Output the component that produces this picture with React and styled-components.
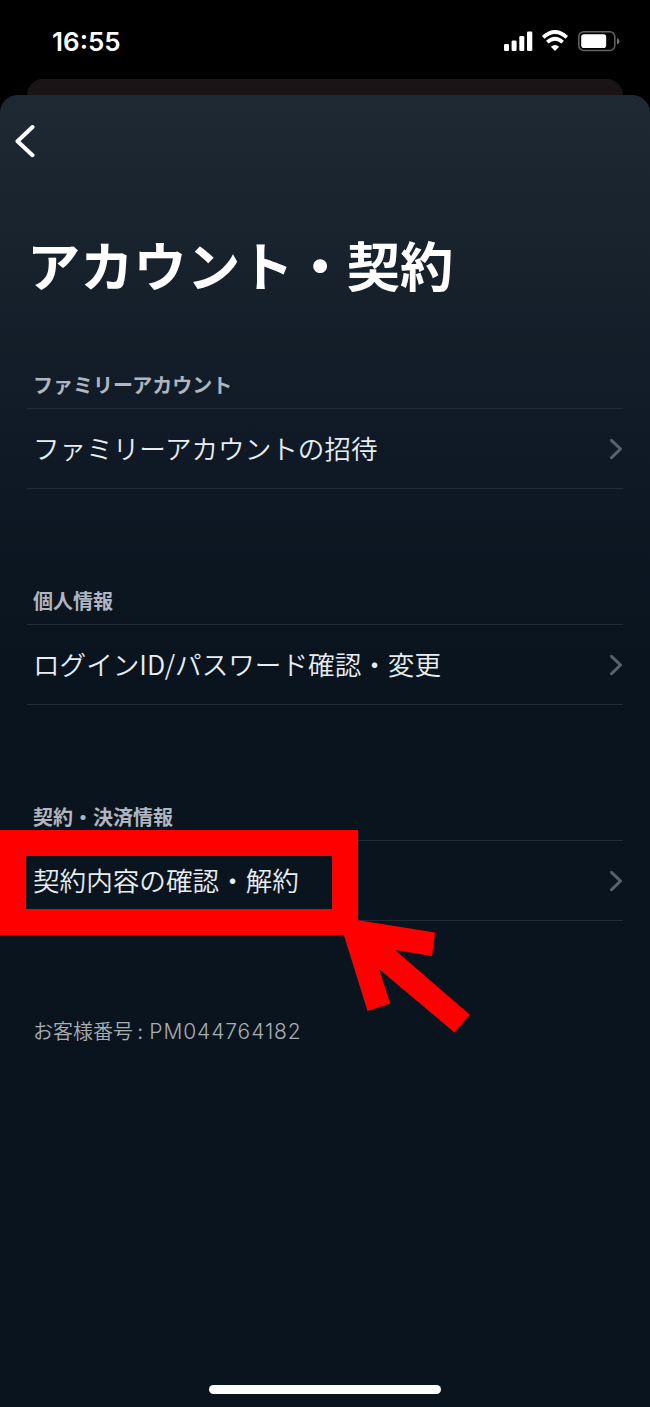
import React from 'react';
import styled, { createGlobalStyle } from 'styled-components';

const sections = [
  {
    title: 'ファミリーアカウント',
    item: 'ファミリーアカウントの招待',
  },
  {
    title: '個人情報',
    item: 'ログインID/パスワード確認・変更',
  },
  {
    title: '契約・決済情報',
    item: '契約内容の確認・解約',
    marked: true,
  },
];

function App() {
  return (
    <>
      <GlobalStyle />
      <Screen>
        <StatusBar>
          <Clock>16:55</Clock>
          <StatusIcons />
        </StatusBar>
        <BackCard />
        <Sheet>
          <BackButton aria-label="戻る">
            <svg width="22" height="34" viewBox="0 0 22 34" fill="none">
              <path
                d="M18.5 3L3.5 17.3L18.5 31.2"
                stroke="#fff"
                strokeWidth="4"
                strokeLinecap="round"
                strokeLinejoin="round"
              />
            </svg>
          </BackButton>
          <Title>アカウント・契約</Title>
          <SectionList>
            {sections.map(section => (
              <Section key={section.title}>
                <SectionTitle>{section.title}</SectionTitle>
                <Row>
                  <RowText>{section.item}</RowText>
                  <Chevron />
                  {section.marked && (
                    <>
                      <Marker />
                      <Arrow />
                    </>
                  )}
                </Row>
              </Section>
            ))}
          </SectionList>
          <CustomerNumber>
            お客様番号 : <Digits>PM044764182</Digits>
          </CustomerNumber>
          <HomeIndicator />
        </Sheet>
      </Screen>
    </>
  );
}

export default App;

function StatusIcons() {
  return (
    <svg width="118" height="24" viewBox="503 29 118 24" fill="none">
      <g fill="#fff">
        <rect x="504" y="44" width="5" height="7" rx="1.3" />
        <rect x="511.6" y="40.4" width="5" height="10.6" rx="1.3" />
        <rect x="519.3" y="36" width="5" height="15" rx="1.3" />
        <rect x="527" y="31.5" width="5.3" height="19.5" rx="1.3" />
        <path d="M555 51L550.9 46.7Q555 43.2 559.1 46.7Z" />
      </g>
      <path
        d="M543.2 37.4Q555 26.6 566.8 37.4M547.3 42.2Q555 35.4 562.7 42.2"
        stroke="#fff"
        strokeWidth="3.7"
      />
      <rect
        x="578.8"
        y="31.8"
        width="36"
        height="18.6"
        rx="5"
        stroke="#666"
        strokeWidth="1.5"
      />
      <rect x="581.2" y="34.2" width="25" height="13.8" rx="2.8" fill="#fff" />
      <path d="M617 38Q619.4 39 619.4 41.2Q619.4 43.4 617 44.4Z" fill="#777" />
    </svg>
  );
}

function Chevron() {
  return (
    <svg width="14" height="22" viewBox="0 0 14 22" fill="none">
      <path
        d="M2.5 2.3L11.5 11L2.5 19.7"
        stroke="#59616a"
        strokeWidth="3"
        strokeLinecap="round"
        strokeLinejoin="round"
      />
    </svg>
  );
}

function Arrow() {
  return (
    <ArrowSvg width="135" height="120" viewBox="335 915 135 120">
      <path
        d="M343.5 934L357 920L435 932.5L432 956L395 950L469.5 1014.5L454.5 1032.5L379 969L390 1003.5L367.5 1011Z"
        fill="#f00"
      />
    </ArrowSvg>
  );
}

const GlobalStyle = createGlobalStyle`
  * {
    box-sizing: border-box;
  }

  body {
    margin: 0;
    background: #000;
    font-family: 'Noto Sans CJK JP', sans-serif;
  }
`;

const Screen = styled.div`
  width: 650px;
  height: 1407px;
  display: flex;
  flex-direction: column;
  overflow: hidden;
  background: #000;
`;

const StatusBar = styled.div`
  height: 79px;
  padding: 29px 29px 0 52px;
  display: flex;
  justify-content: space-between;
  align-items: flex-start;
`;

const Clock = styled.div`
  font-family: Inter, sans-serif;
  font-size: 26px;
  font-weight: 600;
  line-height: 26px;
  color: #fff;
`;

const BackCard = styled.div`
  height: 32px;
  margin: 0 27px -16px;
  border-radius: 16px 16px 0 0;
  background: #1b1416;
`;

const Sheet = styled.div`
  flex: 1;
  display: flex;
  flex-direction: column;
  align-items: stretch;
  padding: 29px 27px 13px;
  border-radius: 18px 18px 0 0;
  background: linear-gradient(#1f2934 0, #18222d 160px, #101a26 340px, #0a141f 560px);
  z-index: 1;
`;

const BackButton = styled.button`
  width: 22px;
  height: 34px;
  margin-left: -13px;
  padding: 0;
  border: none;
  background: none;
  cursor: pointer;
`;

const Title = styled.h1`
  margin: 66px 0 0;
  font-size: 53.3px;
  font-weight: 700;
  line-height: 80px;
  color: #fff;
  white-space: nowrap;
`;

const SectionList = styled.div`
  display: flex;
  flex-direction: column;
  gap: 97px;
  margin-top: 66px;
`;

const Section = styled.section`
  display: flex;
  flex-direction: column;
`;

const SectionTitle = styled.h2`
  margin: 0;
  padding-left: 6px;
  font-size: 20px;
  font-weight: 700;
  line-height: 30px;
  height: 38px;
  color: #b0b5bf;
`;

const Row = styled.div`
  position: relative;
  display: flex;
  justify-content: space-between;
  align-items: center;
  height: 81px;
  padding-left: 6px;
  border-top: 1px solid #222c36;
  border-bottom: 1px solid #222c36;
`;

const RowText = styled.div`
  margin-top: -2px;
  font-size: 26.6px;
  font-weight: 350;
  line-height: 40px;
  color: #e8edf2;
  white-space: nowrap;
`;

const Marker = styled.div`
  position: absolute;
  top: -11px;
  left: -27px;
  width: 358px;
  height: 105px;
  border: 26px solid #f00;
`;

const ArrowSvg = styled.svg`
  position: absolute;
  top: 74px;
  left: 308px;
`;

const CustomerNumber = styled.div`
  margin-top: 95px;
  padding-left: 6px;
  font-size: 20px;
  font-weight: 350;
  line-height: 30px;
  color: #a9adb4;
`;

const Digits = styled.span`
  margin-left: 2px;
  font-family: Inter, sans-serif;
  font-size: 21px;
  font-weight: 300;
  letter-spacing: 0.9px;
`;

const HomeIndicator = styled.div`
  width: 232px;
  height: 9px;
  margin: auto auto 0;
  border-radius: 5px;
  background: #fff;
`;
